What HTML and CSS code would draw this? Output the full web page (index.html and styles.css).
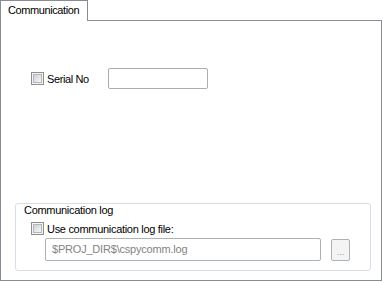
FILE: index.html
```html
<!DOCTYPE html>
<html lang="en">
<head>
    <meta charset="UTF-8">
    <title>Communication</title>
    <link rel="stylesheet" href="styles.css">
</head>
<body>
    <div class="dialog">
        <div class="tabs">
            <div class="tab">Communication</div>
            <div class="tab-rest"></div>
        </div>
        <div class="panel">
            <div class="serial-row">
                <span class="check"></span>
                <span class="serial-label">Serial No</span>
                <div class="textbox serial-box"></div>
            </div>

            <div class="group">
                <div class="group-title">Communication log</div>
                <div class="check-row">
                    <span class="check"></span>
                    <span class="check-label">Use communication log file:</span>
                </div>
                <div class="file-row">
                    <div class="textbox file-box disabled">$PROJ_DIR$\cspycomm.log</div>
                    <div class="browse-btn">...</div>
                </div>
            </div>
        </div>
    </div>
</body>
</html>
```

FILE: styles.css
```css
body {
    margin: 0;
    background: #ffffff;
    font-family: 'Liberation Sans', Arial, sans-serif;
    font-size: 11px;
    letter-spacing: -0.3px;
    color: #000;
}

.dialog {
    width: 382px;
}

.tabs {
    display: flex;
    height: 21px;
}

.tab {
    width: 88px;
    box-sizing: border-box;
    border: 1px solid #898c95;
    border-bottom: none;
    padding: 3px 0 0 7px;
    line-height: 13px;
    letter-spacing: -0.4px;
}

.tab-rest {
    flex: 1;
    border-bottom: 1px solid #898c95;
}

.panel {
    box-sizing: border-box;
    height: 260px;
    border: 1px solid #898c95;
    border-top: none;
    display: flex;
    flex-direction: column;
}

.serial-row {
    display: flex;
    align-items: center;
    margin: 47px 0 0 30px;
    height: 21px;
}

.serial-label {
    width: 61px;
    margin-left: 3px;
    letter-spacing: -0.4px;
}

.check {
    width: 13px;
    height: 13px;
    box-sizing: border-box;
    border: 1px solid #8e8f8f;
    background: #f4f4f4;
    padding: 1px;
    flex-shrink: 0;
}

.check::before {
    content: '';
    display: block;
    width: 100%;
    height: 100%;
    box-sizing: border-box;
    border: 1px solid #b3b6ba;
    background: linear-gradient(135deg, #cdd0d4, #f7f7f7);
}

.textbox {
    box-sizing: border-box;
    border: 1px solid #abadb3;
    border-radius: 2px;
    background: #fff;
}

.serial-box {
    width: 100px;
    height: 21px;
}

.group {
    margin: auto 10px 9px 14px;
    border: 1px solid #d5dfe5;
    border-radius: 3px;
    padding: 0 0 9px 0;
}

.group-title {
    display: inline-block;
    margin: -7px 0 0 6px;
    padding: 0 2px;
    background: #fff;
    line-height: 13px;
    height: 13px;
}

.check-row {
    display: flex;
    align-items: center;
    margin: 5px 0 0 15px;
    height: 13px;
}

.check-label {
    margin-left: 3px;
}

.file-row {
    display: flex;
    align-items: flex-start;
    margin: 3px 0 0 29px;
}

.file-box {
    width: 276px;
    height: 23px;
    line-height: 21px;
    padding-left: 6px;
    letter-spacing: -0.2px;
}

.disabled {
    border-color: #adb2b5;
    color: #838383;
}

.browse-btn {
    width: 19px;
    height: 22px;
    box-sizing: border-box;
    margin: 1px 0 0 10px;
    border: 1px solid #adb2b5;
    border-radius: 2px;
    background: #f4f4f4;
    color: #9a9a9a;
    font-size: 9px;
    letter-spacing: 0;
    text-align: center;
    line-height: 24px;
}
```
